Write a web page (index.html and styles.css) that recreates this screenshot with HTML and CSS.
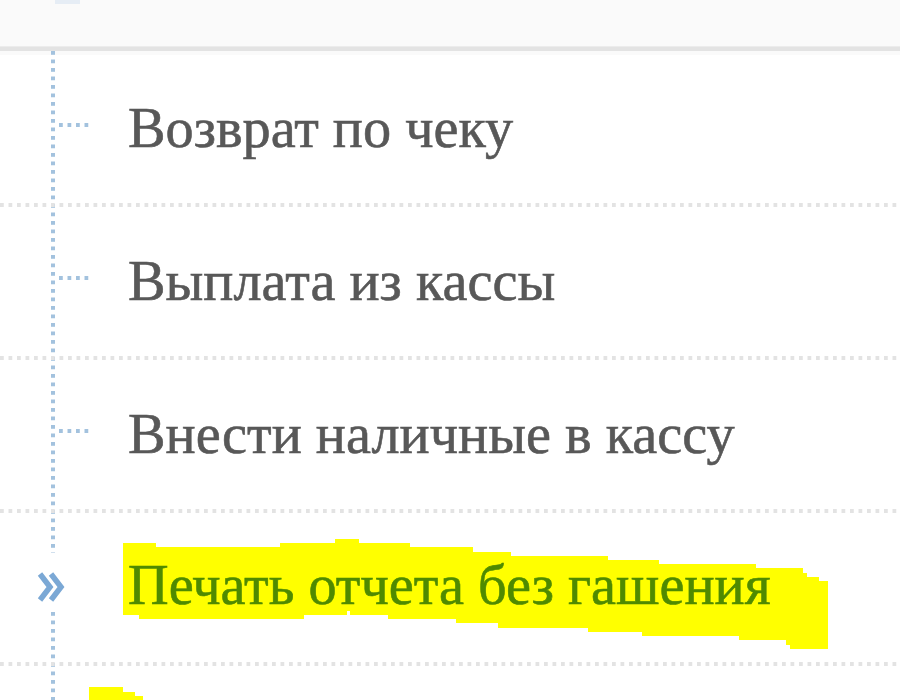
FILE: index.html
```html
<!DOCTYPE html>
<html lang="ru">
<head>
<meta charset="utf-8">
<title>Меню</title>
<link rel="stylesheet" href="styles.css">
</head>
<body>
<div class="header"><div class="header-tab"></div></div>
<div class="tree">
  <div class="row">
    <div class="conn"><div class="branch"></div></div>
    <div class="label">Возврат по чеку</div>
  </div>
  <div class="sep"></div>
  <div class="row">
    <div class="conn"><div class="branch"></div></div>
    <div class="label">Выплата из кассы</div>
  </div>
  <div class="sep"></div>
  <div class="row">
    <div class="conn"><div class="branch"></div></div>
    <div class="label">Внести наличные в кассу</div>
  </div>
  <div class="sep"></div>
  <div class="row row-active">
    <svg class="marker-hl" width="900" height="149" viewBox="0 0 900 149">
      <polygon fill="#ffff00" points="123,30 156,30 156,34 280,34 280,30 335,30 335,26 359,26 359,30 410,30 410,34 473,34 473,39 511,39 511,43 608,43 608,47 659,47 659,51 756,51 756,55 803,55 803,60 807,60 807,64 819,64 819,68 828,68 828,136 790,136 790,132 786,132 786,127 739,127 739,123 642,123 642,119 588,119 588,115 498,115 498,110 456,110 456,106 388,106 388,102 350,102 350,98 347,98 347,102 304,102 304,106 139,106 139,102 123,102"/>
    </svg>
    <div class="conn conn-active">
      <div class="current">
        <svg width="32" height="34" viewBox="0 0 32 34">
          <polyline points="3,4 13,17 3,30" fill="none" stroke="#7ba8d5" stroke-width="5.5"/>
          <polyline points="14,4 24,17 14,30" fill="none" stroke="#7ba8d5" stroke-width="5.5"/>
        </svg>
      </div>
    </div>
    <div class="label label-active">Печать отчета без гашения</div>
  </div>
  <div class="sep"></div>
  <div class="row row-next">
    <svg class="marker-hl" width="900" height="60" viewBox="0 0 900 60">
      <polygon fill="#ffff00" points="89,21 123,21 123,26 135,26 135,30 143,30 143,60 89,60"/>
    </svg>
  </div>
</div>
</body>
</html>
```
FILE: styles.css
```css
html, body {
  margin: 0;
  padding: 0;
  width: 900px;
  height: 700px;
  overflow: hidden;
  background: #ffffff;
}

body {
  font-family: "Liberation Serif", "Times New Roman", serif;
}

.header {
  height: 46px;
  background: #fafafa;
  border-bottom: 1px solid #ececec;
  box-shadow: 0 4px 0 #e3e3e3;
  margin-bottom: 4px;
  display: flex;
}

.header-tab {
  margin-left: 55px;
  width: 25px;
  height: 4px;
  background: #e6edf5;
}

.tree {
  padding-top: 3px;
  height: 650px;
  background-image:
    linear-gradient(to bottom, #a3c2de 50%, rgba(255,255,255,0) 50%),
    linear-gradient(to bottom, #fafafa 4px, #ffffff 4px);
  background-size: 4px 8.5px, 100% 100%;
  background-position: 51px 0, 0 0;
  background-repeat: repeat-y, no-repeat;
}

.row {
  position: relative;
  display: grid;
  grid-template-columns: 128px 1fr;
  height: 149px;
}

.conn {
  padding-top: 69px;
}

.branch {
  margin-left: 59px;
  width: 30px;
  height: 4px;
  background-image: linear-gradient(to right, #a3c2de 50%, rgba(255,255,255,0) 50%);
  background-size: 8.5px 4px;
}

.label {
  position: relative;
  padding-top: 46px;
  font-size: 56.3px;
  line-height: 57px;
  color: #585858;
  -webkit-text-stroke: 0.6px currentColor;
  white-space: nowrap;
}

.sep {
  height: 4px;
  background-image: linear-gradient(to right, #e3e3e3 50%, rgba(255,255,255,0) 50%);
  background-size: 8.5px 4px;
}

.marker-hl {
  position: absolute;
  left: 0;
  top: 0;
}

.conn-active {
  position: relative;
  padding-top: 40px;
}

.current {
  margin-left: 37px;
  width: 32px;
  height: 59px;
  background: #ffffff;
  display: flex;
  flex-direction: column;
  padding-top: 17px;
  box-sizing: border-box;
}

.label-active {
  padding-top: 44px;
  color: #4f8a00;
}

.row-next {
  height: 60px;
}
```
